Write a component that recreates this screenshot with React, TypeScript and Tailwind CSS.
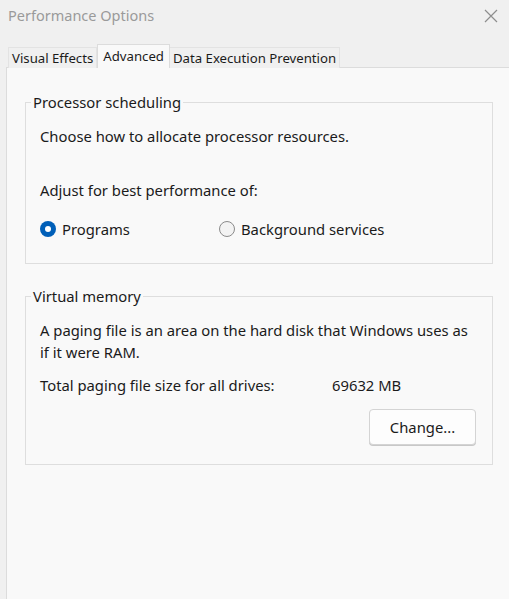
import React from 'react';

const Radio = ({ checked, label }: { checked?: boolean; label: string }) => (
  <label className="flex items-center gap-[6px]">
    {checked ? (
      <span className="w-[16px] h-[16px] rounded-full bg-[#005fb8] flex items-center justify-center">
        <span className="w-[6px] h-[6px] rounded-full bg-white" />
      </span>
    ) : (
      <span className="w-[16px] h-[16px] rounded-full border border-[#8b8b8b] bg-[#f3f3f3]" />
    )}
    <span>{label}</span>
  </label>
);

export default function App() {
  return (
    <div
      className="w-[509px] h-[599px] bg-[#f0f0f0] flex flex-col overflow-hidden text-[#1b1b1b]"
      style={{ fontFamily: '"Noto Sans", "Open Sans", sans-serif' }}
    >
      {/* title bar */}
      <div className="h-[32px] flex items-center justify-between pl-[8px] pr-[4px]">
        <span className="text-[14.5px] text-[#9a9a9a]">Performance Options</span>
        <svg width="28" height="28" viewBox="0 0 28 28" className="text-[#8e8e8e]">
          <path d="M8 8 L20 20 M20 8 L8 20" stroke="currentColor" strokeWidth="1.2" fill="none" />
        </svg>
      </div>

      {/* tabs */}
      <div className="flex items-end pl-[8px] mt-[12px] text-[13.2px] leading-[20px] -mb-px relative z-10">
        <div className="px-[3px] h-[21px] border border-b-0 border-[#e3e3e3] bg-[#f0f0f0]">Visual Effects</div>
        <div className="px-[5px] h-[24px] pt-[1px] border border-b-0 border-[#dcdcdc] bg-[#f9f9f9]">Advanced</div>
        <div className="px-[3px] h-[21px] border border-b-0 border-l-0 border-[#e3e3e3] bg-[#f0f0f0]">Data Execution Prevention</div>
      </div>

      {/* panel */}
      <div className="flex-1 ml-[6px] bg-[#f9f9f9] border-l border-t border-[#dcdcdc] pl-[18px] pr-[16px] pt-[24px] text-[14.8px] leading-[20px]">
        <fieldset className="border border-[#dedede] pl-[14px] pb-[24px]">
          <legend className="-ml-[9px] px-[2px]">Processor scheduling</legend>
          <p className="mt-[14px]">Choose how to allocate processor resources.</p>
          <p className="mt-[34px]">Adjust for best performance of:</p>
          <div className="mt-[19px] flex">
            <div className="w-[179px]">
              <Radio checked label="Programs" />
            </div>
            <Radio label="Background services" />
          </div>
        </fieldset>

        <fieldset className="mt-[22px] border border-[#dedede] pl-[14px] pb-[19px]">
          <legend className="-ml-[9px] px-[2px]">Virtual memory</legend>
          <p className="mt-[13px] leading-[22px]">
            A paging file is an area on the hard disk that Windows uses as
            <br />
            if it were RAM.
          </p>
          <div className="mt-[12px] flex">
            <span className="w-[292px]">Total paging file size for all drives:</span>
            <span>69632 MB</span>
          </div>
          <div className="mt-[14px] flex justify-end pr-[16px]">
            <button className="w-[107px] h-[36px] bg-[#fdfdfd] border border-[#d4d4d4] rounded-[4px] shadow-[0_1px_0_#c8c8c8]">
              Change...
            </button>
          </div>
        </fieldset>
      </div>
    </div>
  );
}
